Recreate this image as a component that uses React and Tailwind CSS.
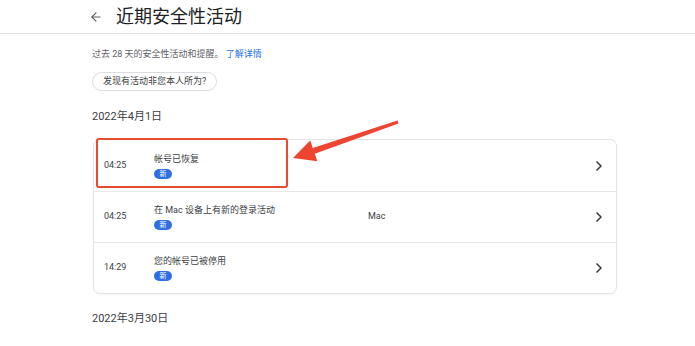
import React from 'react';
import { ArrowLeft, ChevronRight } from 'lucide-react';

const rows = [
    { time: '04:25', title: '帐号已恢复', device: '' },
    { time: '04:25', title: '在 Mac 设备上有新的登录活动', device: 'Mac' },
    { time: '14:29', title: '您的帐号已被停用', device: '' },
];

const ActivityRow = ({ item, first }) => (
    <div className={`flex items-center h-[51px] pl-[10px] pr-[9px] ${first ? '' : 'border-t border-[#e8e8e8]'}`}>
        <span className="w-[50px] text-[9px] text-[#3c4043]">{item.time}</span>
        <div className="w-[214px] flex flex-col items-start">
            <span className="text-[9px] leading-[12px] text-[#3c4043]">{item.title}</span>
            <span className="mt-[4px] w-[18px] h-[10px] rounded-full bg-[#2f6fe4] text-white text-[7px] leading-[10px] text-center">新</span>
        </div>
        <span className="flex-1 text-[9px] text-[#3c4043]">{item.device}</span>
        <ChevronRight size={16} strokeWidth={2.5} className="text-[#3c4043]" />
    </div>
);

export default function App() {
    return (
        <div className="relative w-[695px] h-[346px] overflow-hidden bg-white font-['Roboto','Noto_Sans_CJK_SC',sans-serif]">
            {/* 顶部标题栏 */}
            <div className="h-[34px] border-b border-[#e2e2e2] flex items-center pl-[89px]">
                <ArrowLeft size={14} strokeWidth={2} className="text-[#5f6368]" />
                <h1 className="ml-[13px] text-[18px] leading-[24px] text-[#202124]">近期安全性活动</h1>
            </div>

            <div className="pl-[92px] pr-[78px]">
                <p className="pt-[14px] text-[9px] leading-[12px] text-[#5f6368]">
                    过去 28 天的安全性活动和提醒。 <span className="text-[#1a73e8]">了解详情</span>
                </p>

                <button className="mt-[12px] h-[19px] px-[10px] rounded-full border border-[#dadce0] text-[9px] text-[#3c4043]">
                    发现有活动非您本人所为?
                </button>

                <p className="mt-[19px] text-[11px] leading-[14px] text-[#3c4043]">2022年4月1日</p>

                <div className="relative mt-[15px] ml-px rounded-[7px] border border-[#e3e3e3] shadow-[0_1px_2px_rgba(0,0,0,0.04)]">
                    {rows.map((item, i) => (
                        <ActivityRow key={i} item={item} first={i === 0} />
                    ))}
                    {/* 红色标注框 */}
                    <div className="absolute left-[2px] top-[-2px] w-[192px] h-[50px] border-2 border-[#ea4a30] rounded-[3px]" />
                </div>

                <p className="mt-[18px] text-[11px] leading-[14px] text-[#3c4043]">2022年3月30日</p>
            </div>

            {/* 红色箭头 */}
            <svg className="absolute left-0 top-0 pointer-events-none" width="695" height="346" viewBox="0 0 695 346">
                <polygon
                    points="293,158 317.4,161.3 314.8,153.7 398.5,123.4 397.5,120.6 312.8,148.1 310.2,140.5"
                    fill="#ee4530"
                />
            </svg>
        </div>
    );
}
